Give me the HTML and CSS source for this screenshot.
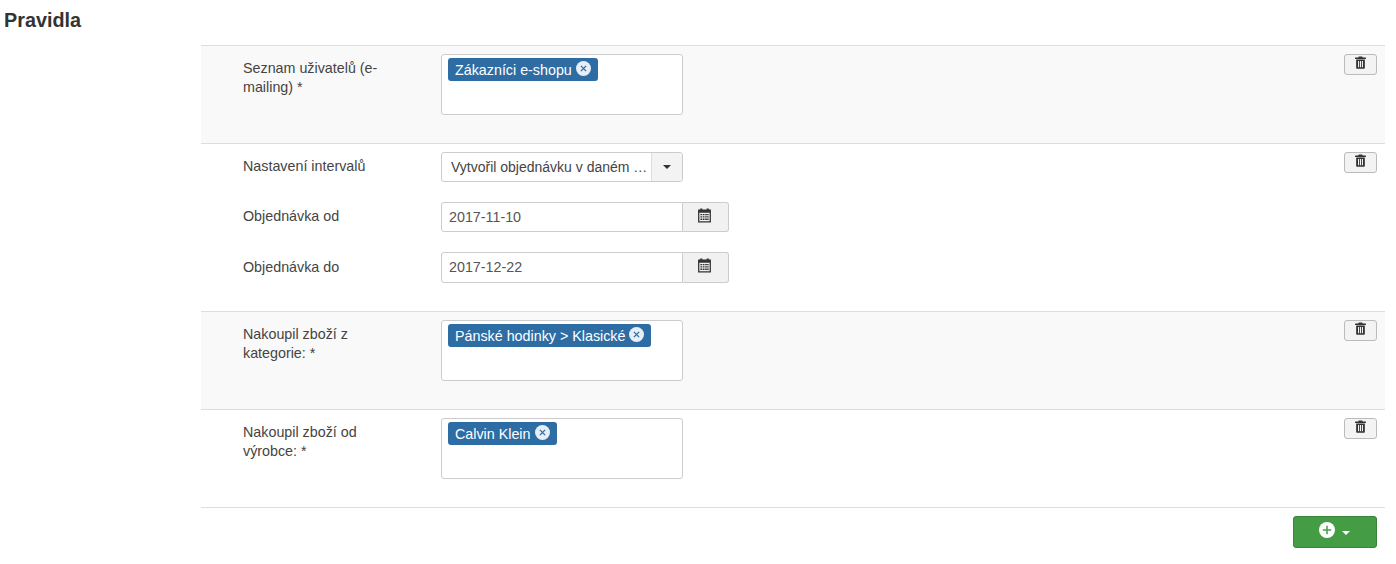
FILE: index.html
```html
<!DOCTYPE html>
<html lang="en">
<head>
  <meta charset="UTF-8" />
  <title>Pravidla</title>
  <link rel="stylesheet" href="styles.css">
</head>
<body>
  <svg class="defs" width="0" height="0" aria-hidden="true">
    <symbol id="ico-trash" viewBox="0 0 12 12">
      <path fill="currentColor" d="M4.400 0.400h3.200l.5 1H11v1.300H1V1.400h2.900zM2 3.300h8v7.500c0 .5-.4.900-.9.900H2.900c-.5 0-.9-.4-.9-.9zM3.700 4.500v5.900h1V4.500zM5.500 4.500v5.900h1V4.500zM7.300 4.500v5.900h1V4.500z" fill-rule="evenodd"/>
    </symbol>
    <symbol id="ico-cal" viewBox="0 0 14 14">
      <path fill="currentColor" fill-rule="evenodd" d="M1 1.500h2V.5h2v1h4v-1h2v1h2V13.500H1zM2.200 4.500v7.800h9.600V4.500zM3.200 5.500h1.600v1.200H3.200zM5.400 5.500H7v1.200H5.400zM7.600 5.500h1.600v1.200H7.600zM9.500 5.500h1.400v1.200H9.500zM3.200 7.700h1.600v1.200H3.200zM5.400 7.700H7v1.200H5.400zM7.600 7.700h1.600v1.200H7.600zM9.500 7.700h1.400v1.200H9.500zM3.200 9.900h1.600v1.200H3.200zM5.400 9.900H7v1.200H5.400zM7.600 9.900h1.600v1.200H7.600zM9.500 9.900h1.400v1.200H9.500z"/>
    </symbol>
    <symbol id="ico-x" viewBox="0 0 16 16">
      <circle cx="8" cy="8" r="8" fill="#e8eef5"/>
      <path d="M5.200 5.200l5.600 5.600M10.800 5.200l-5.600 5.600" stroke="#2e6da4" stroke-width="1.400" fill="none"/>
    </symbol>
  </svg>

  <h2 class="title">Pravidla</h2>

  <div class="rules">
    <section class="rule rule-alt">
      <div class="fields">
        <div class="field">
          <label class="field-label">Seznam uživatelů (e-mailing) *</label>
          <div class="tagbox">
            <span class="tag">Zákazníci e-shopu <svg class="tag-x"><use href="#ico-x"/></svg></span>
          </div>
        </div>
      </div>
      <button class="btn-del" aria-label="Smazat"><svg class="ico-trash"><use href="#ico-trash"/></svg></button>
    </section>

    <section class="rule rule-dates">
      <div class="fields">
        <div class="field field-short">
          <label class="field-label">Nastavení intervalů</label>
          <div class="select">
            <span class="select-text">Vytvořil objednávku v daném časovém období</span>
            <span class="select-btn"><i class="caret"></i></span>
          </div>
        </div>
        <div class="field field-short">
          <label class="field-label">Objednávka od</label>
          <div class="date">
            <input class="date-input" type="text" value="2017-11-10">
            <span class="date-btn"><svg class="ico-cal"><use href="#ico-cal"/></svg></span>
          </div>
        </div>
        <div class="field field-short field-tall">
          <label class="field-label">Objednávka do</label>
          <div class="date">
            <input class="date-input" type="text" value="2017-12-22">
            <span class="date-btn"><svg class="ico-cal"><use href="#ico-cal"/></svg></span>
          </div>
        </div>
      </div>
      <button class="btn-del" aria-label="Smazat"><svg class="ico-trash"><use href="#ico-trash"/></svg></button>
    </section>

    <section class="rule rule-alt">
      <div class="fields">
        <div class="field">
          <label class="field-label">Nakoupil zboží z kategorie: *</label>
          <div class="tagbox">
            <span class="tag">Pánské hodinky &gt; Klasické <svg class="tag-x"><use href="#ico-x"/></svg></span>
          </div>
        </div>
      </div>
      <button class="btn-del" aria-label="Smazat"><svg class="ico-trash"><use href="#ico-trash"/></svg></button>
    </section>

    <section class="rule">
      <div class="fields">
        <div class="field">
          <label class="field-label">Nakoupil zboží od výrobce: *</label>
          <div class="tagbox">
            <span class="tag">Calvin Klein <svg class="tag-x"><use href="#ico-x"/></svg></span>
          </div>
        </div>
      </div>
      <button class="btn-del" aria-label="Smazat"><svg class="ico-trash"><use href="#ico-trash"/></svg></button>
    </section>

    <div class="rules-foot">
      <button class="btn-add" aria-label="Přidat">
        <svg class="ico-plus" viewBox="0 0 16 16">
          <circle cx="8" cy="8" r="8" fill="#fff"/>
          <path d="M8 3.800v8.400M3.800 8h8.400" stroke="#449d44" stroke-width="1.500"/>
        </svg>
        <i class="caret caret-white"></i>
      </button>
    </div>
  </div>
</body>
</html>
```

FILE: styles.css
```css
body {
  margin: 0;
  background: #fff;
  font-family: "Liberation Sans", Arial, sans-serif;
  font-size: 14.3px;
  line-height: 19px;
  color: #444;
}

.defs {
  display: block;
  height: 0;
}

.title {
  margin: 0;
  padding: 10px 0 0 4px;
  font-size: 19.8px;
  line-height: 20px;
  font-weight: bold;
  color: #333;
}

.rules {
  margin: 15px 11px 0 201px;
}

.rule {
  display: flex;
  justify-content: space-between;
  align-items: flex-start;
  height: 98px;
  box-sizing: border-box;
  padding: 8px 8px 0 42px;
  border-top: 1px solid #ddd;
}

.rule-alt {
  background: #f9f9f9;
}

.rule-dates {
  height: 168px;
}

.fields {
  display: flex;
  flex-direction: column;
}

.field {
  display: flex;
  align-items: flex-start;
}

.field-short {
  height: 50px;
}

.field-label {
  width: 166px;
  margin-right: 32px;
  padding-top: 5px;
}

.field-tall .field-label {
  padding-top: 6px;
}

.field-tall .date {
  height: 31px;
}

.tagbox {
  width: 242px;
  height: 61px;
  box-sizing: border-box;
  padding: 3px 6px;
  background: #fff;
  border: 1px solid #ccc;
  border-radius: 3px;
}

.tag {
  display: inline-flex;
  align-items: center;
  gap: 4px;
  height: 23px;
  box-sizing: border-box;
  padding: 1px 7px 0;
  background: #2e6da4;
  border-radius: 3px;
  color: #fff;
  white-space: nowrap;
}

.tag-x {
  width: 15px;
  height: 15px;
  margin-bottom: 3px;
}

.select {
  display: flex;
  width: 242px;
  height: 30px;
  box-sizing: border-box;
  background: #fff;
  border: 1px solid #ccc;
  border-radius: 3px;
}

.select-text {
  flex: 1;
  min-width: 0;
  padding: 5px 0 0 9px;
  font-size: 14px;
  overflow: hidden;
  white-space: nowrap;
  text-overflow: ellipsis;
}

.select-btn {
  display: flex;
  align-items: center;
  justify-content: center;
  width: 30px;
  background: #f3f3f3;
  border-left: 1px solid #ddd;
  border-radius: 0 3px 3px 0;
}

.caret {
  display: block;
  width: 0;
  height: 0;
  border-top: 4px solid #333;
  border-left: 4px solid transparent;
  border-right: 4px solid transparent;
}

.date {
  display: flex;
  width: 288px;
  height: 30px;
}

.date-input {
  width: 242px;
  box-sizing: border-box;
  padding: 0 7px;
  border: 1px solid #ccc;
  border-radius: 3px 0 0 3px;
  font: inherit;
  color: #555;
}

.date-btn {
  display: flex;
  align-items: center;
  justify-content: center;
  flex: 1;
  background: #f1f1f1;
  border: 1px solid #ccc;
  border-left: 0;
  border-radius: 0 3px 3px 0;
  color: #333;
}

.ico-cal {
  width: 15px;
  height: 15px;
  margin: -4px 0 0 -3px;
}

.btn-del {
  display: flex;
  align-items: center;
  justify-content: center;
  width: 33px;
  height: 21px;
  padding: 0 0 4px;
  background: #f3f3f3;
  border: 1px solid #bbb;
  border-radius: 3px;
  color: #333;
}

.ico-trash {
  width: 13px;
  height: 13px;
}

.rules-foot {
  display: flex;
  justify-content: flex-end;
  padding: 8px 8px 0 0;
  border-top: 1px solid #ddd;
}

.btn-add {
  display: flex;
  align-items: center;
  justify-content: center;
  gap: 6px;
  width: 84px;
  height: 32px;
  padding: 0 0 0 1px;
  background: #449d44;
  border: 1px solid #398439;
  border-radius: 3px;
}

.ico-plus {
  width: 16px;
  height: 16px;
  margin: -5px 0 0 -2px;
}

.caret-white {
  border-top-color: #fff;
  margin: 2px 0 0 1px;
}
```
